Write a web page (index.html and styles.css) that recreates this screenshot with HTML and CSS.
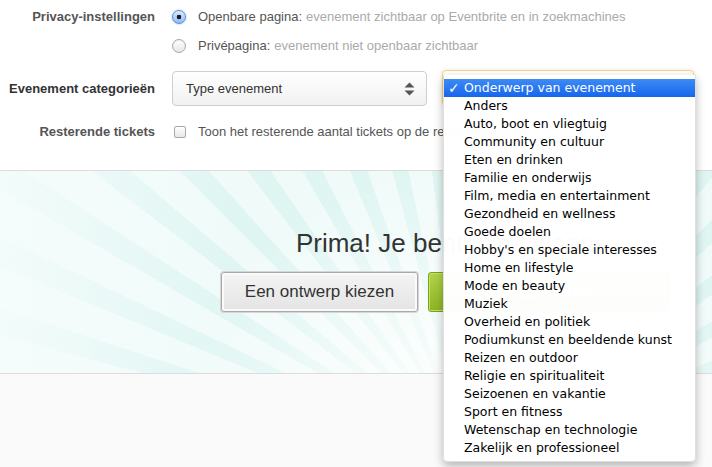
FILE: index.html
```html
<!DOCTYPE html>
<html lang="nl">

<head>
    <meta charset="UTF-8">
    <meta name="viewport" content="width=device-width, initial-scale=1.0">
    <title>Evenement opties</title>

    <link rel="stylesheet" href="styles.css">

</head>

<body>
    <div id="settings">
        <div class="row">
            <div class="label">Privacy-instellingen</div>
            <div class="controls">
                <label class="option">
                    <input type="radio" name="privacy" class="radio" checked>
                    <span class="opt_title">Openbare pagina:</span>
                    <span class="opt_desc">evenement zichtbaar op Eventbrite en in zoekmachines</span>
                </label>
                <label class="option">
                    <input type="radio" name="privacy" class="radio">
                    <span class="opt_title">Privépagina:</span>
                    <span class="opt_desc">evenement niet openbaar zichtbaar</span>
                </label>
            </div>
        </div>
        <div class="row row_center">
            <div class="label label_dark">Evenement categorieën</div>
            <div class="selects">
                <div class="select">
                    <span>Type evenement</span>
                    <!-- up / down arrows -->
                    <svg class="arrows" width="11" height="14" viewBox="0 0 11 14">
                        <path d="M5.5 0.5 L10.5 5.5 L0.5 5.5 Z" fill="#555"/>
                        <path d="M5.5 13.5 L10.5 8.5 L0.5 8.5 Z" fill="#555"/>
                    </svg>
                </div>
                <div class="select select_focus"></div>
            </div>
        </div>
        <div class="row row_center row_tickets">
            <div class="label">Resterende tickets</div>
            <label class="option">
                <input type="checkbox" class="checkbox">
                <span class="opt_title">Toon het resterende aantal tickets op de registratiepagina</span>
            </label>
        </div>
    </div>

    <div id="hero">
        <div class="hero_inner">
            <h2 class="hero_title">Prima! Je bent bijna klaar.</h2>
            <div class="hero_buttons">
                <button class="btn btn_gray">Een ontwerp kiezen</button>
                <button class="btn btn_green">Publiceren</button>
            </div>
        </div>
    </div>

    <div id="bottom"></div>

    <!-- open dropdown of the second select -->
    <ul class="menu">
        <li class="menu_item selected"><span class="check">✓</span>Onderwerp van evenement</li>
        <li class="menu_item">Anders</li>
        <li class="menu_item">Auto, boot en vliegtuig</li>
        <li class="menu_item">Community en cultuur</li>
        <li class="menu_item">Eten en drinken</li>
        <li class="menu_item">Familie en onderwijs</li>
        <li class="menu_item">Film, media en entertainment</li>
        <li class="menu_item">Gezondheid en wellness</li>
        <li class="menu_item">Goede doelen</li>
        <li class="menu_item">Hobby's en speciale interesses</li>
        <li class="menu_item">Home en lifestyle</li>
        <li class="menu_item">Mode en beauty</li>
        <li class="menu_item">Muziek</li>
        <li class="menu_item">Overheid en politiek</li>
        <li class="menu_item">Podiumkunst en beeldende kunst</li>
        <li class="menu_item">Reizen en outdoor</li>
        <li class="menu_item">Religie en spiritualiteit</li>
        <li class="menu_item">Seizoenen en vakantie</li>
        <li class="menu_item">Sport en fitness</li>
        <li class="menu_item">Wetenschap en technologie</li>
        <li class="menu_item">Zakelijk en professioneel</li>
    </ul>

</body>

</html>
```

FILE: styles.css
```css
* {
    font-family: 'Liberation Sans', Arial, sans-serif;
    box-sizing: border-box;
}

body {
    margin: 0;
    background-color: #fafafa;
    overflow: hidden;
}

#settings {
    background-color: white;
    padding: 7px 0 28px 0;
    border-bottom: 1px solid #dcdcdc;
}

.row {
    display: flex;
    gap: 17px;
    align-items: flex-start;
}

.row_center {
    align-items: center;
    margin-top: 15px;
}

.row_tickets {
    margin-top: 16px;
}

.label {
    width: 155px;
    flex-shrink: 0;
    text-align: right;
    font-size: 13px;
    font-weight: bold;
    line-height: 20px;
    color: #555;
}

.label_dark {
    color: #333;
}

.controls {
    display: flex;
    flex-direction: column;
    gap: 9px;
}

.option {
    display: flex;
    align-items: center;
    font-size: 13px;
    line-height: 20px;
    color: #555;
    white-space: nowrap;
}

.opt_desc {
    color: #aaa;
    margin-left: 4px;
}

.radio {
    appearance: none;
    margin: 0 12px 0 0;
    width: 14px;
    height: 14px;
    border-radius: 50%;
    border: 1px solid #a8a8a8;
    background: linear-gradient(#ffffff, #e6e6e6);
    box-shadow: inset 0 1px 1px rgba(0, 0, 0, 0.08);
}

.radio:checked {
    border-color: #5b8fd6;
    background: radial-gradient(circle, #1b1b1b 0, #1b1b1b 2px, transparent 2.6px),
        linear-gradient(#dcebfd, #8dbdf5);
    box-shadow: 0 0 2px rgba(60, 130, 230, 0.6);
}

.checkbox {
    appearance: none;
    margin: 0 12px 0 2px;
    width: 12px;
    height: 12px;
    border-radius: 2px;
    border: 1px solid #a8a8a8;
    background: linear-gradient(#ffffff, #e8e8e8);
}

.selects {
    display: flex;
    gap: 15px;
}

.select {
    width: 255px;
    height: 35px;
    border: 1px solid #cfcfcf;
    border-radius: 4px;
    background: linear-gradient(#ffffff, #f1f1f1);
    display: flex;
    align-items: center;
    justify-content: space-between;
    padding: 0 11px 0 13px;
    font-size: 13px;
    color: #333;
}

.select_focus {
    width: 252px;
    height: 36px;
    margin-top: -1px;
    border-color: #f0d48f;
    box-shadow: 0 0 3px rgba(240, 200, 110, 0.6);
}

#hero {
    height: 203px;
    border-bottom: 1px solid #dcdcdc;
    background-color: #f0fbf9;
    background-image:
        linear-gradient(90deg, rgba(246, 253, 252, 0.85) 0, rgba(246, 253, 252, 0) 240px),
        radial-gradient(circle at 470px 290px, rgba(255, 255, 255, 0.95) 0, rgba(255, 255, 255, 0.7) 110px, rgba(255, 255, 255, 0) 300px),
        repeating-conic-gradient(from 0deg at 470px 290px, rgba(206, 240, 236, 0.5) 0deg 3deg, rgba(206, 240, 236, 0) 3deg 7.5deg);
    padding-top: 57px;
}

.hero_inner {
    margin-left: 221px;
    width: 449px;
    display: flex;
    flex-direction: column;
    align-items: center;
}

.hero_title {
    margin: 0;
    font-size: 26px;
    font-weight: normal;
    line-height: 30px;
    color: #333;
    white-space: nowrap;
}

.hero_buttons {
    display: flex;
    gap: 10px;
    margin-top: 14px;
    align-self: stretch;
}

.btn {
    height: 40px;
    font-size: 17px;
    padding: 0 10px;
    border-radius: 3px;
    cursor: pointer;
}

.btn_gray {
    width: 197px;
    color: #333;
    border: 1px solid #a9a9a9;
    background: linear-gradient(#f4f4f4, #e4e4e4);
    box-shadow: inset 0 0 0 2px #fafafa, 0 0 0 1px #d6d6d6;
}

.btn_green {
    width: 242px;
    color: white;
    font-weight: bold;
    border: 1px solid #7d9f1c;
    background: linear-gradient(#b2d34a, #8cb424);
    box-shadow: inset 0 0 0 1px #c6e26a;
}

#bottom {
    height: 100px;
}

.menu {
    position: absolute;
    top: 75px;
    left: 443px;
    width: 253px;
    margin: 0;
    padding: 4px 0 4px 0;
    list-style: none;
    background-color: rgba(255, 255, 255, 0.985);
    border: 1px solid rgba(0, 0, 0, 0.12);
    border-top: none;
    border-radius: 0 0 5px 5px;
    box-shadow: 0 4px 10px rgba(0, 0, 0, 0.28);
}

.menu_item {
    height: 18px;
    line-height: 18px;
    padding-left: 20px;
    font-family: 'DejaVu Sans', Verdana, sans-serif;
    font-size: 12.5px;
    color: black;
    white-space: nowrap;
    position: relative;
}

.selected {
    color: white;
    background: linear-gradient(#3d8bf5, #1566ec);
}

.check {
    position: absolute;
    left: 4px;
    font-size: 14px;
    font-weight: bold;
    font-family: 'DejaVu Sans', sans-serif;
}
```
